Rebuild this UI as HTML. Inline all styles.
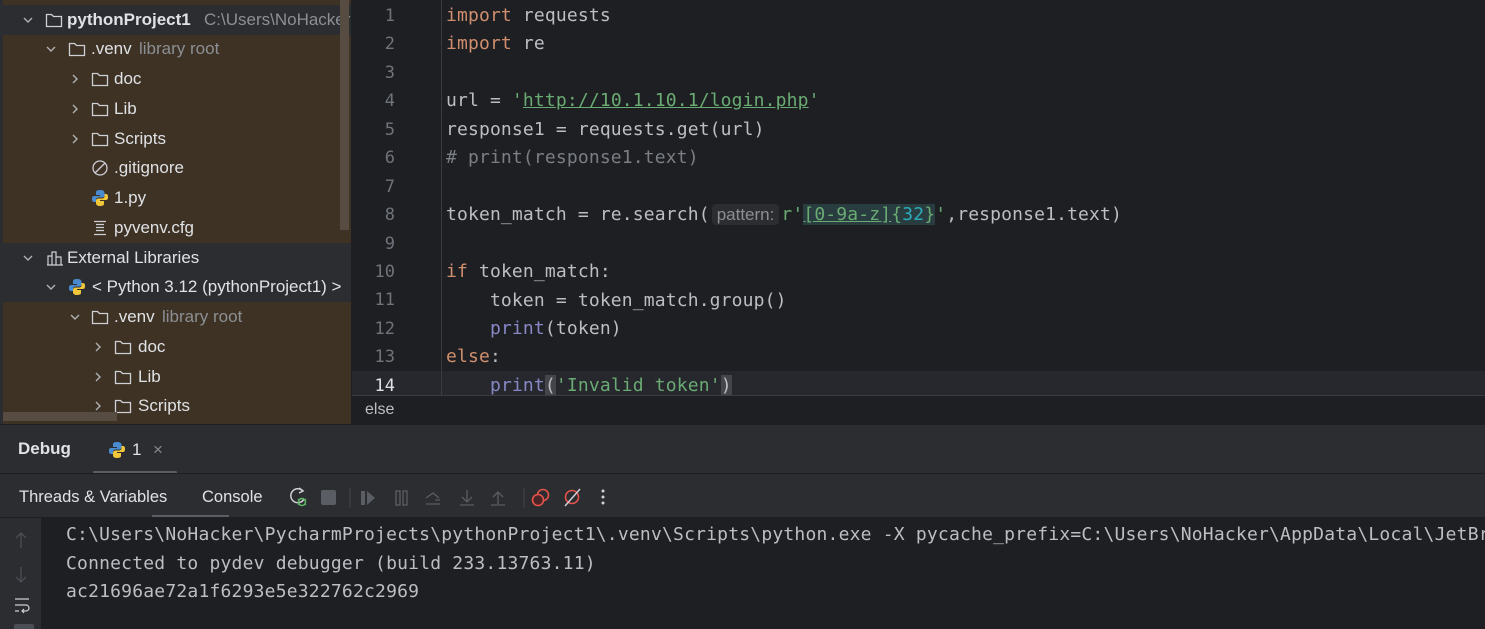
<!DOCTYPE html>
<html><head><meta charset="utf-8"><style>
*{margin:0;padding:0;box-sizing:border-box}
body{width:1485px;height:629px;overflow:hidden;background:#1e1f22;font-family:"Liberation Sans",sans-serif;position:relative;color:#dfe1e5}
.abs{position:absolute}
#tree{left:0;top:0;width:351px;height:424px;background:#3d3224;overflow:hidden}
.row{position:absolute;left:0;width:351px;height:30px;font-size:17px;line-height:30px;white-space:nowrap;color:#dfe1e5}
.row.hd{background:#2b2d30}
.gray{color:#8c8f94}
.chev{position:absolute;top:0}
.ic{position:absolute;top:7px}
.mono{font-family:"DejaVu Sans Mono","Liberation Mono",monospace}
#ed .ln{position:absolute;left:352px;width:43px;text-align:right;color:#6f737a;font-size:17px}
.code{position:absolute;left:446px;font-size:18px;letter-spacing:0.15px;white-space:pre;color:#bcbec4}
.kw{color:#cf8e6d}.str{color:#6aab73}.cm{color:#7a7e85}.bi{color:#8888c6}.num{color:#2aacb8}
</style></head><body>
<svg width="0" height="0" style="position:absolute"><defs>
<symbol id="fold" viewBox="0 0 18 16"><path d="M1.5 2.5h5l2 2h8v10h-15z" fill="none" stroke="#ced0d6" stroke-width="1.3"/></symbol>
<symbol id="dn" viewBox="0 0 12 12"><path d="M2 4l4 4 4-4" fill="none" stroke="#afb1b3" stroke-width="1.4"/></symbol>
<symbol id="rt" viewBox="0 0 12 12"><path d="M4 2l4 4-4 4" fill="none" stroke="#afb1b3" stroke-width="1.4"/></symbol>
<symbol id="py" viewBox="0 0 18 18"><path d="M9 1C5 1 5 2.5 5 4v2h4v1H3C1 7 1 9 1 10s0 3 2 3h2v-2c0-1.5 1-2.5 2.5-2.5h3.5c1.5 0 2.5-1 2.5-2.5V4C13.5 2 12 1 9 1z" fill="#4a8bd0"/><path d="M9 17c4 0 4-1.5 4-3v-2H9v-1h6c2 0 2-2 2-3s0-3-2-3h-1.5v2c0 1.5-1 2.5-2.5 2.5H7.5C6 9.5 5 10.5 5 12v2c0 2 1.5 3 4 3z" fill="#f2c83a"/></symbol>
</defs></svg>
<div id="tree" class="abs">
 <div class="row hd" style="top:5px"><svg class="chev" style="left:22px;top:9px" width="12" height="12"><use href="#dn"/></svg>
  <svg class="ic" style="left:45px" width="18" height="16"><use href="#fold"/></svg>
  <b style="position:absolute;left:67px">pythonProject1</b><span class="gray" style="position:absolute;left:204px;font-size:17px">C:\Users\NoHacker</span></div>
 <div class="row" style="top:34px"><svg class="chev" style="left:45px;top:9px" width="12" height="12"><use href="#dn"/></svg>
  <svg class="ic" style="left:68px" width="18" height="16"><use href="#fold"/></svg>
  <span style="position:absolute;left:91px">.venv</span><span class="gray" style="position:absolute;left:139px">library root</span></div>
 <div class="row" style="top:64px"><svg class="chev" style="left:69px;top:9px" width="12" height="12"><use href="#rt"/></svg><svg class="ic" style="left:91px" width="18" height="16"><use href="#fold"/></svg><span style="position:absolute;left:114px">doc</span></div>
 <div class="row" style="top:94px"><svg class="chev" style="left:69px;top:9px" width="12" height="12"><use href="#rt"/></svg><svg class="ic" style="left:91px" width="18" height="16"><use href="#fold"/></svg><span style="position:absolute;left:114px">Lib</span></div>
 <div class="row" style="top:124px"><svg class="chev" style="left:69px;top:9px" width="12" height="12"><use href="#rt"/></svg><svg class="ic" style="left:91px" width="18" height="16"><use href="#fold"/></svg><span style="position:absolute;left:114px">Scripts</span></div>
 <div class="row" style="top:153px"><svg class="ic" style="left:91px" width="18" height="16"><circle cx="9" cy="8" r="7" fill="none" stroke="#ced0d6" stroke-width="1.3"/><path d="M4 13L14 3" stroke="#ced0d6" stroke-width="1.3"/></svg><span style="position:absolute;left:114px">.gitignore</span></div>
 <div class="row" style="top:183px"><svg class="ic" style="left:91px;top:6px" width="18" height="18"><use href="#py"/></svg><span style="position:absolute;left:114px">1.py</span></div>
 <div class="row" style="top:213px"><svg class="ic" style="left:92px" width="16" height="16"><path d="M2 1.5h12M4 4.5h8M4 7.5h8M4 10.5h8M2 14.5h12" stroke="#ced0d6" stroke-width="1.3"/></svg><span style="position:absolute;left:114px">pyvenv.cfg</span></div>
 <div class="row hd" style="top:243px"><svg class="chev" style="left:22px;top:9px" width="12" height="12"><use href="#dn"/></svg><svg class="ic" style="left:46px" width="18" height="16"><path d="M1 15h16M2 15V6h4v9M6 15V2h4v13M10 15V7h5v8" fill="none" stroke="#ced0d6" stroke-width="1.2"/></svg><span style="position:absolute;left:67px">External Libraries</span></div>
 <div class="row hd" style="top:272px"><svg class="chev" style="left:45px;top:9px" width="12" height="12"><use href="#dn"/></svg><svg class="ic" style="left:68px;top:6px" width="18" height="18"><use href="#py"/></svg><span style="position:absolute;left:92px">&lt; Python 3.12 (pythonProject1) &gt;</span></div>
 <div class="row" style="top:302px"><svg class="chev" style="left:69px;top:9px" width="12" height="12"><use href="#dn"/></svg><svg class="ic" style="left:91px" width="18" height="16"><use href="#fold"/></svg><span style="position:absolute;left:114px">.venv</span><span class="gray" style="position:absolute;left:162px">library root</span></div>
 <div class="row" style="top:332px"><svg class="chev" style="left:92px;top:9px" width="12" height="12"><use href="#rt"/></svg><svg class="ic" style="left:114px" width="18" height="16"><use href="#fold"/></svg><span style="position:absolute;left:138px">doc</span></div>
 <div class="row" style="top:362px"><svg class="chev" style="left:92px;top:9px" width="12" height="12"><use href="#rt"/></svg><svg class="ic" style="left:114px" width="18" height="16"><use href="#fold"/></svg><span style="position:absolute;left:138px">Lib</span></div>
 <div class="row" style="top:391px"><svg class="chev" style="left:92px;top:9px" width="12" height="12"><use href="#rt"/></svg><svg class="ic" style="left:114px" width="18" height="16"><use href="#fold"/></svg><span style="position:absolute;left:138px">Scripts</span></div>
 <div class="abs" style="left:340px;top:0;width:9px;height:230px;background:#564c42"></div>
 <div class="abs" style="left:3px;top:412px;width:114px;height:9px;background:#564c42"></div>
</div>
<div class="abs" style="left:0;top:0;width:3px;height:424px;background:#2b2d30"></div>
<div id="ed">
 <div class="abs" style="left:352px;top:371px;width:1133px;height:26px;background:#26282e"></div>
 <div class="abs" style="left:441px;top:0;width:1px;height:395px;background:#393b40"></div>
 <div class="mono" style="position:absolute;left:0;top:3px">
  <div class="ln" style="top:3px">1</div><div class="ln" style="top:31px">2</div><div class="ln" style="top:60px">3</div><div class="ln" style="top:88px">4</div><div class="ln" style="top:117px">5</div><div class="ln" style="top:145px">6</div><div class="ln" style="top:174px">7</div><div class="ln" style="top:202px">8</div><div class="ln" style="top:231px">9</div><div class="ln" style="top:259px">10</div><div class="ln" style="top:287px">11</div><div class="ln" style="top:316px">12</div><div class="ln" style="top:344px">13</div><div class="ln" style="top:373px;color:#dfe1e5">14</div>
  <div class="code" style="top:2px"><span class="kw">import</span> requests</div>
  <div class="code" style="top:30px"><span class="kw">import</span> re</div>
  <div class="code" style="top:87px">url = <span class="str">'<u>http://10.1.10.1/login.php</u>'</span></div>
  <div class="code" style="top:116px">response1 = requests.get(url)</div>
  <div class="code cm" style="top:144px"># print(response1.text)</div>
  <div class="code" style="top:201px">token_match = re.search(<span style="font-family:'Liberation Sans',sans-serif;font-size:17px;letter-spacing:0;color:#8c8f94;background:#2b2d30;border-radius:4px;padding:1px 5px;margin:0 2px">pattern:</span><span class="str">r'<span style="background:#293c40"><u>[0-9</u><u>a-z]</u>{<span class="num">32</span>}</span>'</span>,response1.text)</div>
  <div class="code" style="top:258px"><span class="kw">if</span> token_match:</div>
  <div class="code" style="top:287px">    token = token_match.group()</div>
  <div class="code" style="top:315px">    <span class="bi">print</span>(token)</div>
  <div class="code" style="top:343px"><span class="kw">else</span>:</div>
  <div class="code" style="top:372px">    <span class="bi">print</span><span style="background:#43454a">(</span><span class="str">'Invalid token'</span><span style="background:#43454a">)</span></div>
 </div>
 <div class="abs" style="left:352px;top:395px;width:1133px;height:29px;background:#1e1f22;border-top:1px solid #393b40;font-size:16px;color:#bcbec4;padding:5px 0 0 13px">else</div>
</div>
<div class="abs" style="left:0;top:424px;width:1485px;height:94px;background:#2b2d30;border-top:1px solid #1e1f22"></div>
<div class="abs" style="left:18px;top:439px;font-size:17px;font-weight:bold;color:#dfe1e5">Debug</div>
<svg class="abs" style="left:108px;top:441px" width="18" height="18"><use href="#py"/></svg>
<div class="abs" style="left:132px;top:440px;font-size:17px">1</div>
<div class="abs" style="left:153px;top:440px;font-size:17px;color:#868a91">×</div>
<div class="abs" style="left:93px;top:471px;width:84px;height:3px;background:#5a5d63;border-radius:2px"></div>
<div class="abs" style="left:0;top:473px;width:1485px;height:1px;background:#1e1f22"></div>
<div class="abs" style="left:19px;top:488px;font-size:16.5px">Threads &amp; Variables</div>
<div class="abs" style="left:202px;top:488px;font-size:16.5px">Console</div>
<div class="abs" style="left:152px;top:515px;width:77px;height:3px;background:#5a5d63"></div>
<svg class="abs" style="left:286px;top:485px" width="340" height="26">
 <path d="M17 6a7 7 0 1 0 1 8" fill="none" stroke="#ced0d6" stroke-width="1.5"/><path d="M13 3l4 3-4 2" fill="none" stroke="#ced0d6" stroke-width="1.5"/>
 <circle cx="16" cy="17" r="3.5" fill="none" stroke="#5fb865" stroke-width="1.5"/><path d="M12 14l1 1M20 14l-1 1M12 20l1-1M20 20l-1-1" stroke="#5fb865" stroke-width="1.2"/>
 <rect x="35" y="5" width="15" height="15" rx="2" fill="#5a5d63"/>
 <path d="M64 3v20" stroke="#43454a"/>
 <rect x="75" y="6" width="4" height="14" fill="#5a5d63"/><path d="M81 6l8 7-8 7z" fill="#5a5d63"/>
 <rect x="110" y="6" width="4" height="14" fill="none" stroke="#5a5d63" stroke-width="1.3"/><rect x="117" y="6" width="4" height="14" fill="none" stroke="#5a5d63" stroke-width="1.3"/>
 <path d="M140 13l7-5 6 5M149 15h5M140 19h14" fill="none" stroke="#5a5d63" stroke-width="1.3"/>
 <path d="M181 5v12M176 12l5 5 5-5M174 20h14" fill="none" stroke="#5a5d63" stroke-width="1.3"/>
 <path d="M212 19V7M207 12l5-5 5 5M205 20h14" fill="none" stroke="#5a5d63" stroke-width="1.3"/>
 <path d="M238 3v20" stroke="#43454a"/>
 <circle cx="257" cy="10" r="5.5" fill="none" stroke="#e5534b" stroke-width="1.6"/><circle cx="252" cy="15" r="5.5" fill="#4a2427" stroke="#e5534b" stroke-width="1.6"/>
 <circle cx="286" cy="12" r="6.5" fill="none" stroke="#e5534b" stroke-width="1.6"/><path d="M279 21L294 4" stroke="#ced0d6" stroke-width="1.5"/>
 <circle cx="317" cy="6" r="1.5" fill="#ced0d6"/><circle cx="317" cy="12" r="1.5" fill="#ced0d6"/><circle cx="317" cy="18" r="1.5" fill="#ced0d6"/>
</svg>
<div class="abs" style="left:0;top:517px;width:1485px;height:1px;background:#1e1f22"></div>
<div class="abs" style="left:0;top:518px;width:41px;height:111px;background:#2b2d30"></div>
<svg class="abs" style="left:14px;top:530px" width="26" height="99">
 <path d="M7 3v15M2 8l5-5 5 5" fill="none" stroke="#4b4e54" stroke-width="1.3"/>
 <path d="M7 37v15M2 47l5 5 5-5" fill="none" stroke="#4b4e54" stroke-width="1.3"/>
 <path d="M1 69h14M1 75h11a3 3 0 0 1 0 6H8M10 79l-2 2 2 2M1 81h4" fill="none" stroke="#ced0d6" stroke-width="1.2"/>
 <rect x="0" y="94" width="20" height="8" rx="2" fill="#4b4e54"/>
</svg>
<div class="abs" style="left:41px;top:518px;width:1444px;height:111px;overflow:hidden">
<div class="mono abs" style="left:25px;top:3px;font-size:18px;letter-spacing:0.2px;line-height:28.5px;color:#bcbec4;white-space:pre">C:\Users\NoHacker\PycharmProjects\pythonProject1\.venv\Scripts\python.exe -X pycache_prefix=C:\Users\NoHacker\AppData\Local\JetBrains\PyCharm
Connected to pydev debugger (build 233.13763.11)
ac21696ae72a1f6293e5e322762c2969</div>
</div>
</body></html>
